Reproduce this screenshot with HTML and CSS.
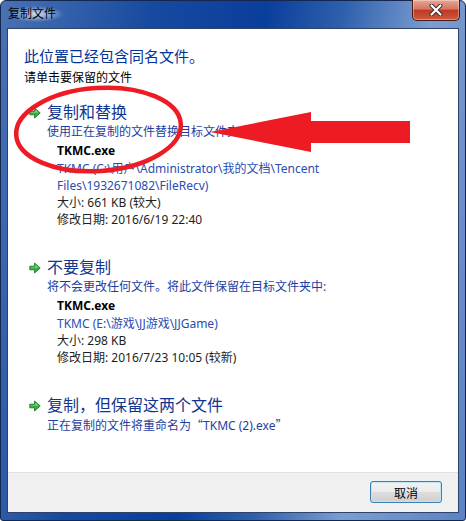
FILE: index.html
```html
<!DOCTYPE html>
<html lang="zh-CN">
  <head>
    <meta charset="UTF-8" />
    <meta name="viewport" content="width=device-width, initial-scale=1.0" />
    <title>复制文件</title>
    <link rel="stylesheet" href="styles.css">
  </head>
  <body>
    <div class="window">
      <div class="titlebar">
        <span class="title">复制文件</span>
        <button class="close" aria-label="关闭">
          <svg width="14" height="12" viewBox="0 0 14 12" xmlns="http://www.w3.org/2000/svg">
            <path d="M2.5 1.5L11.5 10.5M11.5 1.5L2.5 10.5" stroke="#3a2a2a" stroke-width="4" stroke-linecap="round" />
            <path d="M2.5 1.5L11.5 10.5M11.5 1.5L2.5 10.5" stroke="#ffffff" stroke-width="2.2" stroke-linecap="round" />
          </svg>
        </button>
      </div>

      <div class="client">
        <div class="content">
          <h1 class="instruction">此位置已经包含同名文件。</h1>
          <p class="hint">请单击要保留的文件</p>

          <div class="option">
            <div class="option-head">
              <svg class="go" width="12" height="12" viewBox="0 0 12 12" xmlns="http://www.w3.org/2000/svg">
                <path d="M0.8 4.2H5.6V1L11.2 6L5.6 11V7.8H0.8Z" fill="#34b043" stroke="#1d7a2a" stroke-width="0.9" stroke-linejoin="round" />
                <path d="M1.6 5H6.4V2.8L9.6 5.6H1.6Z" fill="#8fdc8c" />
              </svg>
              <span class="option-title">复制和替换</span>
            </div>
            <div class="option-sub">使用正在复制的文件替换目标文件夹中的文件</div>
            <div class="file">
              <div class="file-name">TKMC.exe</div>
              <div class="file-path">TKMC (C:\用户\Administrator\我的文档\Tencent<br>Files\1932671082\FileRecv)</div>
              <div class="file-info">大小: 661 KB (较大)</div>
              <div class="file-info">修改日期: 2016/6/19 22:40</div>
            </div>
          </div>

          <div class="option">
            <div class="option-head">
              <svg class="go" width="12" height="12" viewBox="0 0 12 12" xmlns="http://www.w3.org/2000/svg">
                <path d="M0.8 4.2H5.6V1L11.2 6L5.6 11V7.8H0.8Z" fill="#34b043" stroke="#1d7a2a" stroke-width="0.9" stroke-linejoin="round" />
                <path d="M1.6 5H6.4V2.8L9.6 5.6H1.6Z" fill="#8fdc8c" />
              </svg>
              <span class="option-title">不要复制</span>
            </div>
            <div class="option-sub">将不会更改任何文件。将此文件保留在目标文件夹中:</div>
            <div class="file">
              <div class="file-name">TKMC.exe</div>
              <div class="file-path">TKMC (E:\游戏\JJ游戏\JJGame)</div>
              <div class="file-info">大小: 298 KB</div>
              <div class="file-info">修改日期: 2016/7/23 10:05 (较新)</div>
            </div>
          </div>

          <div class="option">
            <div class="option-head">
              <svg class="go" width="12" height="12" viewBox="0 0 12 12" xmlns="http://www.w3.org/2000/svg">
                <path d="M0.8 4.2H5.6V1L11.2 6L5.6 11V7.8H0.8Z" fill="#34b043" stroke="#1d7a2a" stroke-width="0.9" stroke-linejoin="round" />
                <path d="M1.6 5H6.4V2.8L9.6 5.6H1.6Z" fill="#8fdc8c" />
              </svg>
              <span class="option-title">复制，但保留这两个文件</span>
            </div>
            <div class="option-sub">正在复制的文件将重命名为<span class="cjk">“</span>TKMC (2).exe<span class="cjk">”</span></div>
          </div>
        </div>

        <div class="footer">
          <button class="btn">取消</button>
        </div>
      </div>

      <!-- red marks drawn on top of the screenshot -->
      <svg class="markup" width="466" height="521" viewBox="0 0 466 521" xmlns="http://www.w3.org/2000/svg">
        <ellipse cx="98.5" cy="129.5" rx="82.5" ry="41.5" transform="rotate(-4 98.5 129.5)" fill="none" stroke="#ed1c24" stroke-width="4.5" />
        <path d="M210 132L311 112V121H410V143H311V152Z" fill="#ed1c24" />
      </svg>
    </div>
  </body>
</html>
```

FILE: styles.css
```css
* {
  box-sizing: border-box;
}

html,
body {
  margin: 0;
  padding: 0;
}

body {
  font-family: "Noto Sans", "Noto Sans CJK SC", sans-serif;
  font-size: 12px;
  color: #000;
  background: #fff;
}

.window {
  position: relative;
  width: 466px;
  height: 521px;
  display: flex;
  flex-direction: column;
  padding: 0 6px 7px 6px;
  border: 1px solid #14284f;
  border-radius: 6px 6px 3px 3px;
  background: linear-gradient(100deg, #4a72b4 0%, #16499f 28%, #0a3e9c 48%, #2f60ad 62%, #7c9dd1 78%, #5b82c3 100%);
}

.titlebar {
  height: 27px;
  display: flex;
  justify-content: space-between;
  align-items: flex-start;
}

.title {
  margin-top: 5px;
  margin-left: 1px;
  padding: 0 8px 0 0;
  line-height: 16px;
  color: #000;
  background: radial-gradient(closest-side, rgba(225, 234, 245, 0.9), rgba(225, 234, 245, 0));
  background-size: 100% 100%;
}

.close {
  width: 48px;
  height: 21px;
  margin: -1px -1px 0 0;
  padding: 0;
  display: flex;
  align-items: center;
  justify-content: center;
  border: 1px solid #4b1a12;
  border-top: none;
  border-radius: 0 0 5px 5px;
  background: linear-gradient(#e9a696 0%, #d57560 45%, #bf3a25 52%, #cc5a40 100%);
  box-shadow: inset 0 0 0 1px rgba(255, 255, 255, 0.35);
}

.client {
  flex: 1;
  display: flex;
  flex-direction: column;
  border: 1px solid #2f4368;
}

.content {
  flex: 1;
  background: #fff;
  padding: 17px 0 0 16px;
}

.instruction {
  margin: 0;
  font-size: 15px;
  font-weight: normal;
  line-height: 20px;
  color: #003399;
}

.hint {
  margin: 4px 0 0;
  line-height: 16px;
}

.option {
  margin: 16px 0 0 5px;
}

.option + .option {
  margin-top: 29px;
}

.option-head {
  display: flex;
  align-items: center;
  gap: 6px;
}

.go {
  flex-shrink: 0;
}

.option-title {
  font-size: 16px;
  line-height: 21px;
  color: #11358f;
}

.option-sub {
  margin-left: 18px;
  line-height: 18px;
  color: #1e3d9f;
}

.cjk {
  font-family: "Noto Sans CJK SC", sans-serif;
}

.file {
  margin-left: 28px;
}

.file-name {
  font-weight: bold;
  line-height: 19px;
}

.file-path {
  line-height: 17px;
  color: #2a4cb0;
}

.file-info {
  line-height: 17px;
  color: #1e1e1e;
}

.footer {
  height: 40px;
  display: flex;
  justify-content: flex-end;
  align-items: flex-start;
  padding: 8px 16px 0 0;
  background: #f0f0f0;
  border-top: 1px solid #dfdfdf;
}

.btn {
  width: 72px;
  height: 22px;
  padding: 0;
  font-family: "Noto Sans CJK SC", sans-serif;
  font-size: 12px;
  color: #000;
  border: 1px solid #3c7fb1;
  border-radius: 3px;
  background: linear-gradient(#f2f2f2 0%, #ebebeb 48%, #dddddd 52%, #cfcfcf 100%);
  box-shadow: inset 0 0 0 1px #bfe6f7;
}

.markup {
  position: absolute;
  top: -1px;
  left: -1px;
  pointer-events: none;
}
```
